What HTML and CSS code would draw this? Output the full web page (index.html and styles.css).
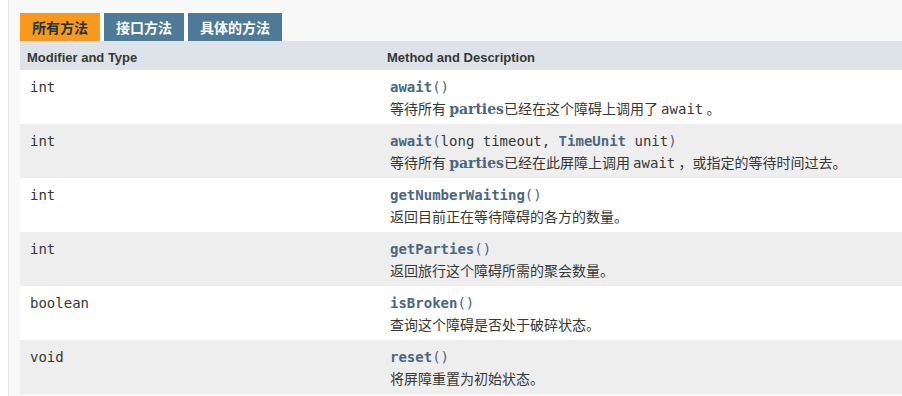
FILE: index.html
```html
<!DOCTYPE html>
<html>
<head>
<meta charset="utf-8">
<link rel="stylesheet" href="styles.css">
</head>
<body>
<div class="content">
  <div class="tabs">
    <span class="tab active">所有方法</span>
    <span class="tab">接口方法</span>
    <span class="tab">具体的方法</span>
  </div>
  <div class="table">
    <div class="row head">
      <div class="c1">Modifier and Type</div>
      <div class="c2">Method and Description</div>
    </div>
    <div class="row alt">
      <div class="c1"><div class="sig"><code>int</code></div></div>
      <div class="c2">
        <div class="sig"><code><b class="m">await</b><span class="p">()</span></code></div>
        <div class="desc">等待所有 <b class="par">parties</b>已经在这个障碍上调用了 <code>await</code> 。</div>
      </div>
    </div>
    <div class="row">
      <div class="c1"><div class="sig"><code>int</code></div></div>
      <div class="c2">
        <div class="sig"><code><b class="m">await</b><span class="p">(</span>long timeout, <b class="m">TimeUnit</b> unit<span class="p">)</span></code></div>
        <div class="desc">等待所有 <b class="par">parties</b>已经在此屏障上调用 <code>await</code> ，或指定的等待时间过去。</div>
      </div>
    </div>
    <div class="row alt">
      <div class="c1"><div class="sig"><code>int</code></div></div>
      <div class="c2">
        <div class="sig"><code><b class="m">getNumberWaiting</b><span class="p">()</span></code></div>
        <div class="desc">返回目前正在等待障碍的各方的数量。</div>
      </div>
    </div>
    <div class="row">
      <div class="c1"><div class="sig"><code>int</code></div></div>
      <div class="c2">
        <div class="sig"><code><b class="m">getParties</b><span class="p">()</span></code></div>
        <div class="desc">返回旅行这个障碍所需的聚会数量。</div>
      </div>
    </div>
    <div class="row alt">
      <div class="c1"><div class="sig"><code>boolean</code></div></div>
      <div class="c2">
        <div class="sig"><code><b class="m">isBroken</b><span class="p">()</span></code></div>
        <div class="desc">查询这个障碍是否处于破碎状态。</div>
      </div>
    </div>
    <div class="row">
      <div class="c1"><div class="sig"><code>void</code></div></div>
      <div class="c2">
        <div class="sig"><code><b class="m">reset</b><span class="p">()</span></code></div>
        <div class="desc">将屏障重置为初始状态。</div>
      </div>
    </div>
  </div>
</div>
</body>
</html>
```
FILE: styles.css
```css
html, body {
  margin: 0;
  padding: 0;
  background: #ffffff;
  overflow: hidden;
}
body {
  font-family: "Liberation Sans", "Noto Sans CJK SC", sans-serif;
  color: #353833;
  font-size: 14px;
}
.content {
  margin-left: 8px;
  border-left: 1px solid #e6e6e6;
  background: #f8f8f8;
  padding: 13px 0 0 11px;
  height: 383px;
}
.tabs {
  display: flex;
  height: 28px;
}
.tab {
  display: flex;
  align-items: center;
  padding: 0 12px;
  border-right: 4px solid #ffffff;
  background: #4d7a97;
  color: #ffffff;
  font-family: "Noto Sans CJK SC", sans-serif;
  font-weight: bold;
  font-size: 14px;
  line-height: 28px;
}
.tab:last-child {
  border-right: none;
}
.tab.active {
  background: #f8981d;
  color: #253441;
}
.table {
  width: 900px;
}
.row {
  display: flex;
  height: 54px;
  background: #eeeeef;
}
.row.alt {
  background: #ffffff;
}
.row.head {
  height: 29px;
  background: #dee3e9;
  align-items: center;
  font-weight: bold;
  font-size: 13px;
}
.head .c1, .head .c2 {
  padding-top: 3px;
}
.c1 {
  width: 360px;
  padding-left: 7px;
  box-sizing: border-box;
}
.c2 {
  flex: 1;
  padding-left: 7px;
}
.row:not(.head) .c1, .row:not(.head) .c2 {
  padding-top: 7px;
  padding-left: 10px;
}
code {
  font-family: "DejaVu Sans Mono", monospace;
  font-size: 14px;
  color: #353833;
}
.sig {
  height: 21px;
  line-height: 21px;
}
.m {
  color: #4a6782;
  font-weight: bold;
}
.p {
  color: #4a6782;
}
.desc {
  font-family: "Noto Sans CJK SC", sans-serif;
  font-size: 14px;
  line-height: 21px;
  color: #353833;
}
.par {
  font-family: "DejaVu Serif", serif;
  color: #4a6782;
  font-weight: bold;
  font-size: 14px;
}
```
